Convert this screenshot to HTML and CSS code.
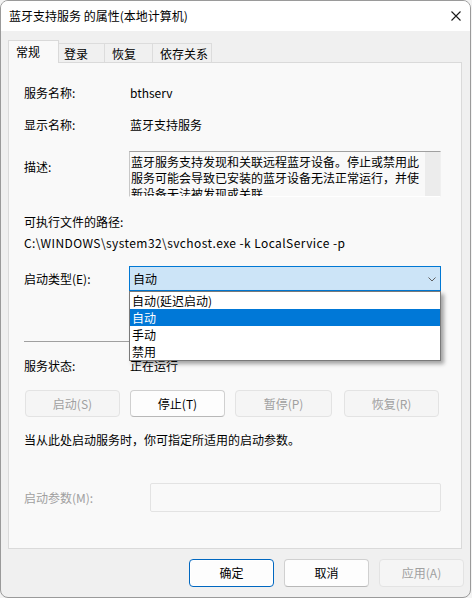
FILE: index.html
```html
<!DOCTYPE html>
<html lang="zh-CN">
<head>
<meta charset="utf-8">
<title>蓝牙支持服务 的属性(本地计算机)</title>
<link rel="stylesheet" href="styles.css">
</head>
<body>
<div class="window">
  <div class="titlebar">
    <span class="title">蓝牙支持服务 的属性(本地计算机)</span>
    <svg class="close" width="10" height="10" viewBox="0 0 10 10"><path d="M0.5 0.5 L9.5 9.5 M9.5 0.5 L0.5 9.5" stroke="#1a1a1a" stroke-width="1.1" fill="none"/></svg>
  </div>
  <div class="tabs">
    <div class="tab active t1">常规</div>
    <div class="tab t2">登录</div>
    <div class="tab t3">恢复</div>
    <div class="tab t4">依存关系</div>
  </div>
  <div class="panel">
    <div class="row r-name"><span class="label">服务名称:</span><span class="value">bthserv</span></div>
    <div class="row r-display"><span class="label">显示名称:</span><span class="value">蓝牙支持服务</span></div>
    <div class="row r-desc">
      <span class="label desc-label">描述:</span>
      <div class="desc">
        <div class="desc-text">蓝牙服务支持发现和关联远程蓝牙设备。停止或禁用此服务可能会导致已安装的蓝牙设备无法正常运行，并使新设备无法被发现或关联。</div>
        <div class="scroll"></div>
      </div>
    </div>
    <div class="path-label">可执行文件的路径:</div>
    <div class="path">C:\WINDOWS\system32\svchost.exe -k LocalService -p</div>
    <div class="row r-start">
      <span class="label">启动类型(E):</span>
      <div class="select-wrap">
        <div class="select"><span>自动</span>
          <svg class="chev" width="8" height="5" viewBox="0 0 8 5"><path d="M0.5 0.5 L4 4 L7.5 0.5" stroke="#606060" stroke-width="1" fill="none"/></svg>
        </div>
        <ul class="dropdown">
          <li>自动(延迟启动)</li>
          <li class="sel">自动</li>
          <li>手动</li>
          <li>禁用</li>
        </ul>
      </div>
    </div>
    <div class="sep"></div>
    <div class="row r-status"><span class="label">服务状态:</span><span class="value">正在运行</span></div>
    <div class="btn-row">
      <button class="btn disabled">启动(S)</button>
      <button class="btn">停止(T)</button>
      <button class="btn disabled wide">暂停(P)</button>
      <button class="btn disabled last">恢复(R)</button>
    </div>
    <div class="hint">当从此处启动服务时，你可指定所适用的启动参数。</div>
    <div class="row r-param"><span class="label muted">启动参数(M):</span><div class="param-input"></div></div>
  </div>
  <div class="footer">
    <button class="btn fbtn primary">确定</button>
    <button class="btn fbtn">取消</button>
    <button class="btn fbtn disabled">应用(A)</button>
  </div>
</div>
</body>
</html>
```
FILE: styles.css
```css
* { box-sizing: border-box; }
html, body { margin: 0; padding: 0; }
body {
  background: #f3f3f3;
  font-family: "Noto Sans CJK SC", "Microsoft YaHei", sans-serif;
  font-size: 12px;
  line-height: 16px;
  color: #000;
}
.window {
  width: 471px;
  height: 598px;
  border: 1px solid #9a9a9a;
  border-radius: 8px;
  overflow: hidden;
  background: #f0f0f0;
  display: flex;
  flex-direction: column;
}
.titlebar {
  height: 30px;
  background: #fff;
  display: flex;
  align-items: center;
  justify-content: space-between;
  padding-left: 8px;
  padding-right: 9px;
  flex: none;
}
.title { color: #000; }
.close { display: block; margin-top: -1px; }
.tabs {
  margin-top: 9px;
  height: 22px;
  display: flex;
  align-items: flex-end;
  padding-left: 7px;
  position: relative;
  z-index: 2;
  flex: none;
}
.tab {
  height: 19px;
  padding-top: 2px;
  background: #f0f0f0;
  border: 1px solid #dcdcdc;
  border-bottom: none;
  color: #000;
}
.tab + .tab { border-left: none; }
.tab.active {
  height: 23px;
  margin-bottom: -1px;
  padding-top: 3px;
  background: #f9f9f9;
  border: 1px solid #d9d9d9;
  border-bottom: none;
}
.t1 { width: 51px; padding-left: 7px; }
.t2 { width: 46px; padding-left: 5px; }
.t3 { width: 48px; padding-left: 7px; }
.t4 { width: 59px; padding-left: 7px; }
.panel {
  margin-left: 7px;
  width: 454px;
  height: 487px;
  background: #f9f9f9;
  border: 1px solid #dadada;
  padding: 22px 0 0 15px;
  flex: none;
  position: relative;
}
.row {
  display: grid;
  grid-template-columns: 105px 312px;
  align-items: start;
}
.value { padding-left: 1px; }
.r-display { margin-top: 16px; }
.r-desc { margin-top: 18px; }
.desc-label { margin-top: 8px; }
.desc {
  height: 46px;
  border-top: 1px solid #a0a0a0;
  border-left: 1px solid #c8c8c8;
  border-right: 1px solid #f0f0f0;
  border-bottom: 1px solid #ffffff;
  background: #f9f9f9;
  display: flex;
  overflow: hidden;
}
.desc-text {
  width: 295px;
  padding: 0 3px 0 1px;
  line-height: 16px;
  margin-top: 2px;
}
.scroll {
  flex: 1;
  background: #ececec;
}
.path-label { margin-top: 17px; }
.path { margin-top: 5px; letter-spacing: 0.42px; }
.r-start { margin-top: 15px; }
.r-start .label { margin-top: 5px; }
.select-wrap { position: relative; }
.select {
  height: 25px;
  background: #cce4f7;
  border: 1px solid #0078d4;
  display: flex;
  align-items: center;
  justify-content: space-between;
  padding: 0 4px 0 3px;
}
.chev { display: block; margin-top: 1px; }
.dropdown {
  position: absolute;
  left: 0;
  top: 25px;
  width: 312px;
  margin: 0;
  padding: 0;
  list-style: none;
  background: #fff;
  border: 1px solid #7a7a7a;
  box-shadow: 3px 3px 4px rgba(0,0,0,0.35);
  z-index: 5;
}
.dropdown li {
  height: 17px;
  line-height: 17px;
  padding-left: 2px;
}
.dropdown li.sel {
  background: #0078d7;
  color: #fff;
}
.sep {
  margin-top: 50px;
  height: 1px;
  width: 417px;
  background: #a0a0a0;
}
.r-status { margin-top: 16px; }
.btn-row {
  margin-top: 16px;
  margin-left: 1px;
  display: flex;
  gap: 10px;
}
.btn {
  font-family: inherit;
  font-size: 12px;
  line-height: 16px;
  width: 95px;
  height: 27px;
  padding: 0;
  background: #fdfdfd;
  color: #000;
  border: 1px solid #d0d0d0;
  border-bottom-color: #b8b8b8;
  border-radius: 4px;
}
.btn.wide { width: 97px; }
.btn.last { margin-left: 2px; }
.btn.disabled {
  background: #f5f5f5;
  color: #a0a0a0;
  border: 1px solid #e3e3e3;
}
.hint { margin-top: 15px; }
.r-param {
  margin-top: 35px;
  grid-template-columns: 126px 291px;
}
.r-param .label { margin-top: 7px; }
.muted { color: #a0a0a0; }
.param-input {
  height: 29px;
  background: #f9f9f9;
  border: 1px solid #e3e3e3;
  border-radius: 2px;
}
.footer {
  margin-top: 10px;
  display: flex;
  justify-content: flex-end;
  gap: 10px;
  padding-right: 6px;
}
.fbtn {
  width: 85px;
  height: 28px;
}
.fbtn.primary {
  border: 1px solid #0067c0;
  box-shadow: inset 0 0 0 1px #ffffff;
}
```
